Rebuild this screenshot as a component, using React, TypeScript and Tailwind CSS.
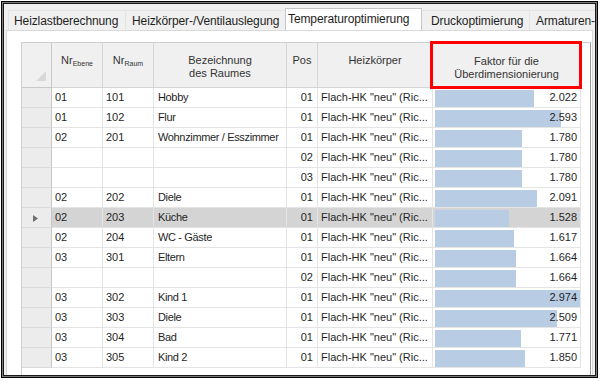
import React from 'react';

type Row = { e: string; r: string; name: string; pos: string; val: number };

const rows: Row[] = [
  { e: '01', r: '101', name: 'Hobby', pos: '01', val: 2.022 },
  { e: '01', r: '102', name: 'Flur', pos: '01', val: 2.593 },
  { e: '02', r: '201', name: 'Wohnzimmer / Esszimmer', pos: '01', val: 1.78 },
  { e: '', r: '', name: '', pos: '02', val: 1.78 },
  { e: '', r: '', name: '', pos: '03', val: 1.78 },
  { e: '02', r: '202', name: 'Diele', pos: '01', val: 2.091 },
  { e: '02', r: '203', name: 'Küche', pos: '01', val: 1.528 },
  { e: '02', r: '204', name: 'WC - Gäste', pos: '01', val: 1.617 },
  { e: '03', r: '301', name: 'Eltern', pos: '01', val: 1.664 },
  { e: '', r: '', name: '', pos: '02', val: 1.664 },
  { e: '03', r: '302', name: 'Kind 1', pos: '01', val: 2.974 },
  { e: '03', r: '303', name: 'Diele', pos: '01', val: 2.509 },
  { e: '03', r: '304', name: 'Bad', pos: '01', val: 1.771 },
  { e: '03', r: '305', name: 'Kind 2', pos: '01', val: 1.85 },
];

const SELECTED = 6;
const MAX = 2.974;

function Tabs() {
  const tab = 'h-[20px] shrink-0 -ml-px flex items-center border border-b-0 border-[#e4e4e4] bg-[#f0f0f0] whitespace-nowrap';
  return (
    <div className="flex items-end h-[26px] pl-[3px] text-[12px] tracking-[-0.1px] text-[#1e1e1e] overflow-hidden">
      <div className={`${tab} w-[118px] pl-[5px]`}>Heizlastberechnung</div>
      <div className={`${tab} w-[161px] pl-[6px]`}>Heizkörper-/Ventilauslegung</div>
      <div className="relative z-10 shrink-0 w-[137px] h-[23px] -ml-px -mb-px flex items-center pl-[2px] border border-b-0 border-[#c6c6c6] bg-white pb-[2px] whitespace-nowrap">
        Temperaturoptimierung
      </div>
      <div className={`${tab} w-[109px] pl-[9px]`}>Druckoptimierung</div>
      <div className={`${tab} w-[80px] pl-[6px] overflow-hidden`}>Armaturen-</div>
    </div>
  );
}

function Header() {
  const cell = 'h-[45px] shrink-0 border-r border-b border-[#d5d5d5] bg-[#f0f0f0] pt-[11px] text-center leading-[13px]';
  return (
    <div className="flex text-[11px] text-[#333]">
      <div className="relative w-[30px] h-[45px] shrink-0 border-r border-b border-[#c8c8c8] bg-[#f0f0f0]">
        <svg className="absolute right-[5px] bottom-[6px]" width="10" height="10" viewBox="0 0 10 10">
          <polygon points="10,0 10,10 0,10" fill="#d8d8d8" />
        </svg>
      </div>
      <div className={`${cell} w-[51px]`}>
        Nr<span className="text-[7px] align-[-2px]">Ebene</span>
      </div>
      <div className={`${cell} w-[51px]`}>
        Nr<span className="text-[7px] align-[-2px]">Raum</span>
      </div>
      <div className={`${cell} w-[133px]`}>
        Bezeichnung
        <br />
        des Raumes
      </div>
      <div className={`${cell} w-[31px]`}>Pos</div>
      <div className={`${cell} w-[115px]`}>Heizkörper</div>
      <div className={`${cell} w-[148px] pt-[12px]`}>
        Faktor für die
        <br />
        Überdimensionierung
      </div>
    </div>
  );
}

function DataRow({ row, selected }: { row: Row; selected: boolean }) {
  const bg = selected ? 'bg-[#d4d4d4]' : 'bg-white';
  const cell = `h-[20px] shrink-0 border-r border-b border-[#e4e4e4] leading-[19px] whitespace-nowrap overflow-hidden ${bg}`;
  const width = Math.round((row.val / MAX) * 145);
  return (
    <div className="flex text-[11px] text-[#1f1f1f]">
      <div className="relative w-[30px] h-[20px] shrink-0 border-r border-b border-r-[#c8c8c8] border-b-[#dadada] bg-[#ececec]">
        {selected && (
          <svg className="absolute left-[11px] top-[7px]" width="5" height="7" viewBox="0 0 5 7">
            <polygon points="0,0 5,3.5 0,7" fill="#6e6e6e" />
          </svg>
        )}
      </div>
      <div className={`${cell} w-[51px] pl-[3px]`}>{row.e}</div>
      <div className={`${cell} w-[51px] pl-[3px]`}>{row.r}</div>
      <div className={`${cell} w-[133px] pl-[4px] tracking-[-0.35px]`}>{row.name}</div>
      <div className={`${cell} w-[31px] pr-[4px] text-right`}>{row.pos}</div>
      <div className={`${cell} w-[115px] pl-[3px]`}>Flach-HK "neu" (Ric...</div>
      <div className={`${cell} relative w-[148px] pr-[3px] text-right`}>
        <div className="absolute left-[2px] top-[2px] h-[17px] bg-[#b8cce4]" style={{ width }} />
        <span className="relative">{row.val.toFixed(3)}</span>
      </div>
    </div>
  );
}

export default function App() {
  return (
    <div className="relative w-[600px] h-[381px] bg-white pt-px pl-px font-['Liberation_Sans',Arial,sans-serif]">
      <div className="w-[597px] h-[377px] border border-black">
        <div className="h-full border border-[#7a7a7a]">
          <div className="h-full border border-[#1a1a1a] bg-[#f0f0f0] pl-[2px] flex flex-col overflow-hidden">
            <Tabs />
            <div className="flex-1 w-[587px] bg-white border border-b-0 border-[#d9d9d9] pl-[14px] pt-[11px]">
              <div className="w-[570px] h-full bg-white border-l border-r border-t border-l-[#d0d0d0] border-t-[#d0d0d0] border-r-[#9a9a9a]">
                <Header />
                {rows.map((row, i) => (
                  <DataRow key={i} row={row} selected={i === SELECTED} />
                ))}
              </div>
            </div>
          </div>
        </div>
      </div>
      <div className="absolute left-[430px] top-[41px] w-[152px] h-[48px] border-[3px] border-[#ff0000]" />
    </div>
  );
}
